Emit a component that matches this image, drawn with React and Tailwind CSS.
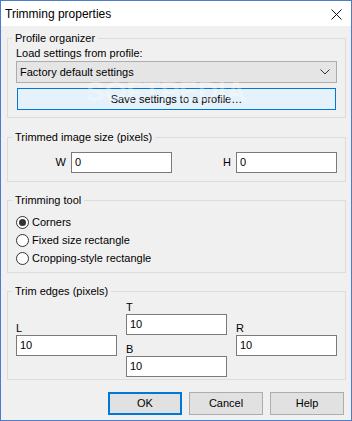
import React from "react";

const font = { fontFamily: '"Liberation Sans", Arial, sans-serif' };

function Group({ title, className = "", children }) {
  return (
    <fieldset className={"border border-[#dcdcdc] p-0 m-0 " + className}>
      <legend className="ml-[4px] px-[3px] text-[11px] leading-[16px] text-black">{title}</legend>
      {children}
    </fieldset>
  );
}

function TextBox({ value, className = "" }) {
  return (
    <div className={"h-[21px] w-[101px] bg-white border border-[#7a7a7a] flex items-center pl-[3px] text-[11px] text-black " + className}>
      {value}
    </div>
  );
}

function Radio({ checked, label }) {
  return (
    <div className="h-[18px] flex items-center gap-[3px]">
      <div className="w-[13px] h-[13px] rounded-full border border-[#333333] bg-white flex items-center justify-center">
        {checked && <div className="w-[7px] h-[7px] rounded-full bg-[#333333]" />}
      </div>
      <span className="text-[11px] text-black">{label}</span>
    </div>
  );
}

export default function App() {
  return (
    <div style={font} className="w-[352px] h-[421px] border border-[#4f7bcb] bg-[#f0f0f0] flex flex-col relative overflow-hidden">
      {/* title bar */}
      <div className="h-[25px] bg-white flex items-center justify-between pl-[4px] pr-[9px] shrink-0">
        <span className="text-[12px] text-black">Trimming properties</span>
        <svg width="11" height="11" viewBox="0 0 11 11" className="mt-[1px]">
          <path d="M0.5 0.5 L10.5 10.5 M10.5 0.5 L0.5 10.5" stroke="#111" strokeWidth="1" fill="none" />
        </svg>
      </div>

      <div className="flex flex-col pl-[6px] pr-[5px]">
        {/* Profile organizer */}
        <Group title="Profile organizer" className="mt-[4px]">
          <div className="px-[8px] pb-[7px] flex flex-col">
            <div className="text-[11px] leading-[15px] text-black">Load settings from profile:</div>
            <div className="h-[22px] bg-[#e5e5e5] border border-[#adadad] flex items-center justify-between pl-[3px] pr-[6px] text-[11px] text-black">
              <span>Factory default settings</span>
              <svg width="10" height="6" viewBox="0 0 10 6">
                <path d="M0.5 0.5 L5 5 L9.5 0.5" stroke="#333" strokeWidth="1" fill="none" />
              </svg>
            </div>
            <div className="mt-[5px] mx-[1px] h-[22px] bg-[#e5f1fb] border border-[#0078d7] flex items-center justify-center text-[11px] text-black">
              Save settings to a profile…
            </div>
          </div>
        </Group>

        {/* Trimmed image size */}
        <Group title="Trimmed image size (pixels)" className="mt-[11px]">
          <div className="flex items-center mt-[7px] pb-[8px]">
            <div className="w-[58px] text-right text-[11px] text-black">W</div>
            <TextBox value="0" className="ml-[5px]" />
            <div className="w-[59px] text-right text-[11px] text-black">H</div>
            <TextBox value="0" className="ml-[5px]" />
          </div>
        </Group>

        {/* Trimming tool */}
        <Group title="Trimming tool" className="mt-[10px]">
          <div className="flex flex-col pl-[8px] mt-[5px] pb-[5px]">
            <Radio checked label="Corners" />
            <Radio label="Fixed size rectangle" />
            <Radio label="Cropping-style rectangle" />
          </div>
        </Group>

        {/* Trim edges */}
        <Group title="Trim edges (pixels)" className="mt-[10px]">
          <div className="flex pl-[8px] gap-[9px] pb-[2px]">
            <div className="flex flex-col mt-[23px]">
              <div className="text-[11px] leading-[13px] text-black">L</div>
              <TextBox value="10" />
            </div>
            <div className="flex flex-col mt-[2px]">
              <div className="text-[11px] leading-[13px] text-black">T</div>
              <TextBox value="10" />
              <div className="text-[11px] leading-[13px] text-black mt-[8px]">B</div>
              <TextBox value="10" />
            </div>
            <div className="flex flex-col mt-[23px]">
              <div className="text-[11px] leading-[13px] text-black">R</div>
              <TextBox value="10" />
            </div>
          </div>
        </Group>
      </div>

      {/* buttons */}
      <div className="flex justify-end gap-[7px] pr-[7px] mt-[12px]">
        <div className="w-[74px] h-[23px] border-2 border-[#0078d7] bg-[#e1e1e1] flex items-center justify-center text-[11px] text-black">OK</div>
        <div className="w-[74px] h-[23px] border border-[#adadad] bg-[#e1e1e1] flex items-center justify-center text-[11px] text-black">Cancel</div>
        <div className="w-[74px] h-[23px] border border-[#adadad] bg-[#e1e1e1] flex items-center justify-center text-[11px] text-black">Help</div>
      </div>

      {/* watermark */}
      <div className="absolute left-[85px] top-[74px] text-[28px] leading-[34px] font-bold text-white opacity-30 pointer-events-none select-none">
        SOFTPEDIA
      </div>
    </div>
  );
}
